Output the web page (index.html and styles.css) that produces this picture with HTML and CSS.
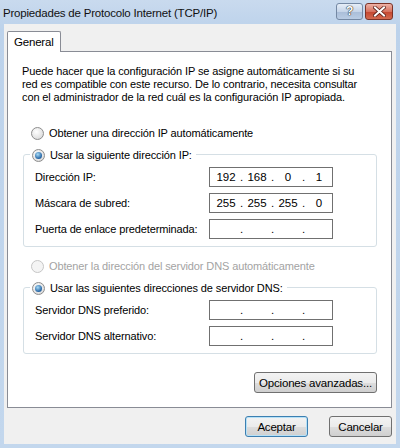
FILE: index.html
```html
<!DOCTYPE html>
<html lang="es">

<head>
    <meta charset="UTF-8">
    <title>Propiedades de Protocolo Internet (TCP/IP)</title>
    <link rel="stylesheet" href="styles.css">
</head>

<body>
    <div class="window">
        <div class="titlebar">
            <span class="title">Propiedades de Protocolo Internet (TCP/IP)</span>
            <div class="caption-btns">
                <span class="cbtn help">?</span>
                <span class="cbtn close">
                    <svg width="13" height="11" viewBox="0 0 13 11">
                        <path d="M2 1.5 L11 9.5 M11 1.5 L2 9.5" stroke="#5a1f18" stroke-width="3.6" stroke-linecap="square"/>
                        <path d="M2 1.5 L11 9.5 M11 1.5 L2 9.5" stroke="#fff" stroke-width="2" stroke-linecap="square"/>
                    </svg>
                </span>
            </div>
        </div>

        <div class="client">
            <div class="tabs">
                <span class="tab">General</span>
            </div>

            <div class="panel">
                <p class="intro">
                    Puede hacer que la configuración IP se asigne automáticamente si su<br>
                    red es compatible con este recurso. De lo contrario, necesita consultar<br>
                    con el administrador de la red cuál es la configuración IP apropiada.
                </p>

                <div class="radio-row first">
                    <span class="radio"></span>Obtener una dirección IP automáticamente
                </div>

                <div class="group">
                    <div class="legend"><span class="radio checked"></span>Usar la siguiente dirección IP:</div>
                    <div class="fields">
                        <div class="field-row">
                            <span>Dirección IP:</span>
                            <span class="ip"><span>192</span><span>.</span><span>168</span><span>.</span><span>0</span><span>.</span><span>1</span></span>
                        </div>
                        <div class="field-row">
                            <span>Máscara de subred:</span>
                            <span class="ip"><span>255</span><span>.</span><span>255</span><span>.</span><span>255</span><span>.</span><span>0</span></span>
                        </div>
                        <div class="field-row">
                            <span>Puerta de enlace predeterminada:</span>
                            <span class="ip"><span></span><span>.</span><span></span><span>.</span><span></span><span>.</span><span></span></span>
                        </div>
                    </div>
                </div>

                <div class="radio-row disabled">
                    <span class="radio"></span>Obtener la dirección del servidor DNS automáticamente
                </div>

                <div class="group">
                    <div class="legend"><span class="radio checked"></span>Usar las siguientes direcciones de servidor DNS:</div>
                    <div class="fields">
                        <div class="field-row">
                            <span>Servidor DNS preferido:</span>
                            <span class="ip"><span></span><span>.</span><span></span><span>.</span><span></span><span>.</span><span></span></span>
                        </div>
                        <div class="field-row">
                            <span>Servidor DNS alternativo:</span>
                            <span class="ip"><span></span><span>.</span><span></span><span>.</span><span></span><span>.</span><span></span></span>
                        </div>
                    </div>
                </div>

                <div class="adv-row">
                    <button class="btn adv">Opciones avanzadas...</button>
                </div>
            </div>

            <div class="footer">
                <button class="btn default">Aceptar</button>
                <button class="btn">Cancelar</button>
            </div>
        </div>
    </div>
</body>

</html>
```

FILE: styles.css
```css
body {
    margin: 0;
    font-family: "Liberation Sans", Arial, sans-serif;
    font-size: 11px;
    letter-spacing: -0.12px;
    color: #000;
}

.window {
    width: 400px;
    height: 448px;
    background: linear-gradient(#c9daee, #bcd2eb 30px, #c3d7ed);
    display: flex;
    flex-direction: column;
}

/* title bar */
.titlebar {
    height: 24px;
    display: flex;
    align-items: center;
    justify-content: space-between;
    padding: 0 7px 0 3px;
    box-sizing: border-box;
}

.title {
    font-size: 11.5px;
    letter-spacing: -0.2px;
    color: #111;
    margin-top: 1px;
}

.caption-btns {
    display: flex;
    gap: 2px;
    margin-top: -2px;
}

.cbtn {
    height: 17px;
    box-sizing: border-box;
    border-radius: 3px;
    display: flex;
    align-items: center;
    justify-content: center;
}

.help {
    width: 27px;
    border: 1px solid #7488a3;
    background: linear-gradient(#e6eef8, #c6d5e9 50%, #a9bdd8 51%, #b9cce4);
    color: #fff;
    font-weight: bold;
    font-size: 12px;
    text-shadow: 0 0 1px #333, 0 0 1px #333, 0 0 1px #333;
}

.close {
    width: 28px;
    border: 1px solid #7b3227;
    background: linear-gradient(#eeb2a6, #d7725f 50%, #c4452f 51%, #d36a50);
}

/* client area */
.client {
    flex: 1;
    margin: 0 4px 4px 4px;
    background: #f0f0f0;
    display: flex;
    flex-direction: column;
}

.tabs {
    display: flex;
    padding: 7px 0 0 3px;
}

.tab {
    position: relative;
    z-index: 1;
    height: 21px;
    box-sizing: border-box;
    padding: 4px 6px 0 6px;
    border: 1px solid #898c95;
    border-bottom: none;
    border-radius: 2px 2px 0 0;
    background: #fff;
    margin-bottom: -1px;
    font-size: 11.5px;
    letter-spacing: -0.2px;
}

.panel {
    margin: 0 4px 0 3px;
    border: 1px solid #898c95;
    background: #fff;
    padding: 13px 14px 14px 14px;
}

.intro {
    margin: 0;
    line-height: 13px;
}

/* radios */
.radio-row {
    display: flex;
    align-items: center;
    height: 16px;
    gap: 5px;
    padding-left: 9px;
}

.radio-row.first {
    margin-top: 21px;
}

.radio-row.disabled {
    margin-top: 11px;
    color: #a3a3a3;
}

.radio {
    position: relative;
    width: 13px;
    height: 13px;
    box-sizing: border-box;
    border-radius: 50%;
    border: 1px solid #8d8d8d;
    background: radial-gradient(circle at 40% 35%, #ffffff, #e4e4e4 60%, #cfcfcf);
    flex: none;
}

.radio.checked::after {
    content: "";
    position: absolute;
    left: 2px;
    top: 2px;
    width: 7px;
    height: 7px;
    border-radius: 50%;
    background: radial-gradient(circle at 40% 35%, #a9dcf7, #2b6aa8 65%, #123f75);
}

.disabled .radio {
    border-color: #c6c6c6;
    background: #f4f4f4;
}

/* group boxes */
.group {
    margin-top: 13px;
    margin-left: 1px;
    border: 1px solid #d5dfe5;
    border-radius: 3px;
    padding: 0 0 7px 11px;
}

.legend {
    display: flex;
    align-items: center;
    gap: 5px;
    width: fit-content;
    height: 16px;
    margin: -8px 0 0 -5px;
    padding: 0 4px 0 2px;
    background: #fff;
}

.fields {
    display: flex;
    flex-direction: column;
    gap: 6px;
    padding-top: 4px;
}

.field-row {
    display: grid;
    grid-template-columns: 174px 124px;
    align-items: center;
    height: 20px;
}

.ip {
    height: 20px;
    box-sizing: border-box;
    border: 1px solid #707070;
    display: grid;
    grid-template-columns: 26px 5px 26px 5px 26px 5px 26px;
    align-items: center;
    padding-left: 3px;
    text-align: center;
    font-size: 11.5px;
}

/* buttons */
.btn {
    font-family: "Liberation Sans", Arial, sans-serif;
    font-size: 11.5px;
    letter-spacing: -0.2px;
    white-space: nowrap;
    height: 21px;
    padding: 0;
    border: 1px solid #707070;
    border-radius: 3px;
    background: linear-gradient(#f3f3f3, #ebebeb 50%, #dddddd 51%, #cfcfcf);
    color: #000;
}

.adv-row {
    display: flex;
    justify-content: flex-end;
    margin-top: 18px;
}

.adv {
    width: 123px;
}

.footer {
    display: flex;
    justify-content: flex-end;
    gap: 21px;
    margin-top: 8px;
    padding-right: 4px;
}

.footer .btn {
    width: 63px;
}

.footer .btn.default {
    border-color: #3c7fb1;
    box-shadow: inset 0 0 0 1px #b6e1f7;
}
```
